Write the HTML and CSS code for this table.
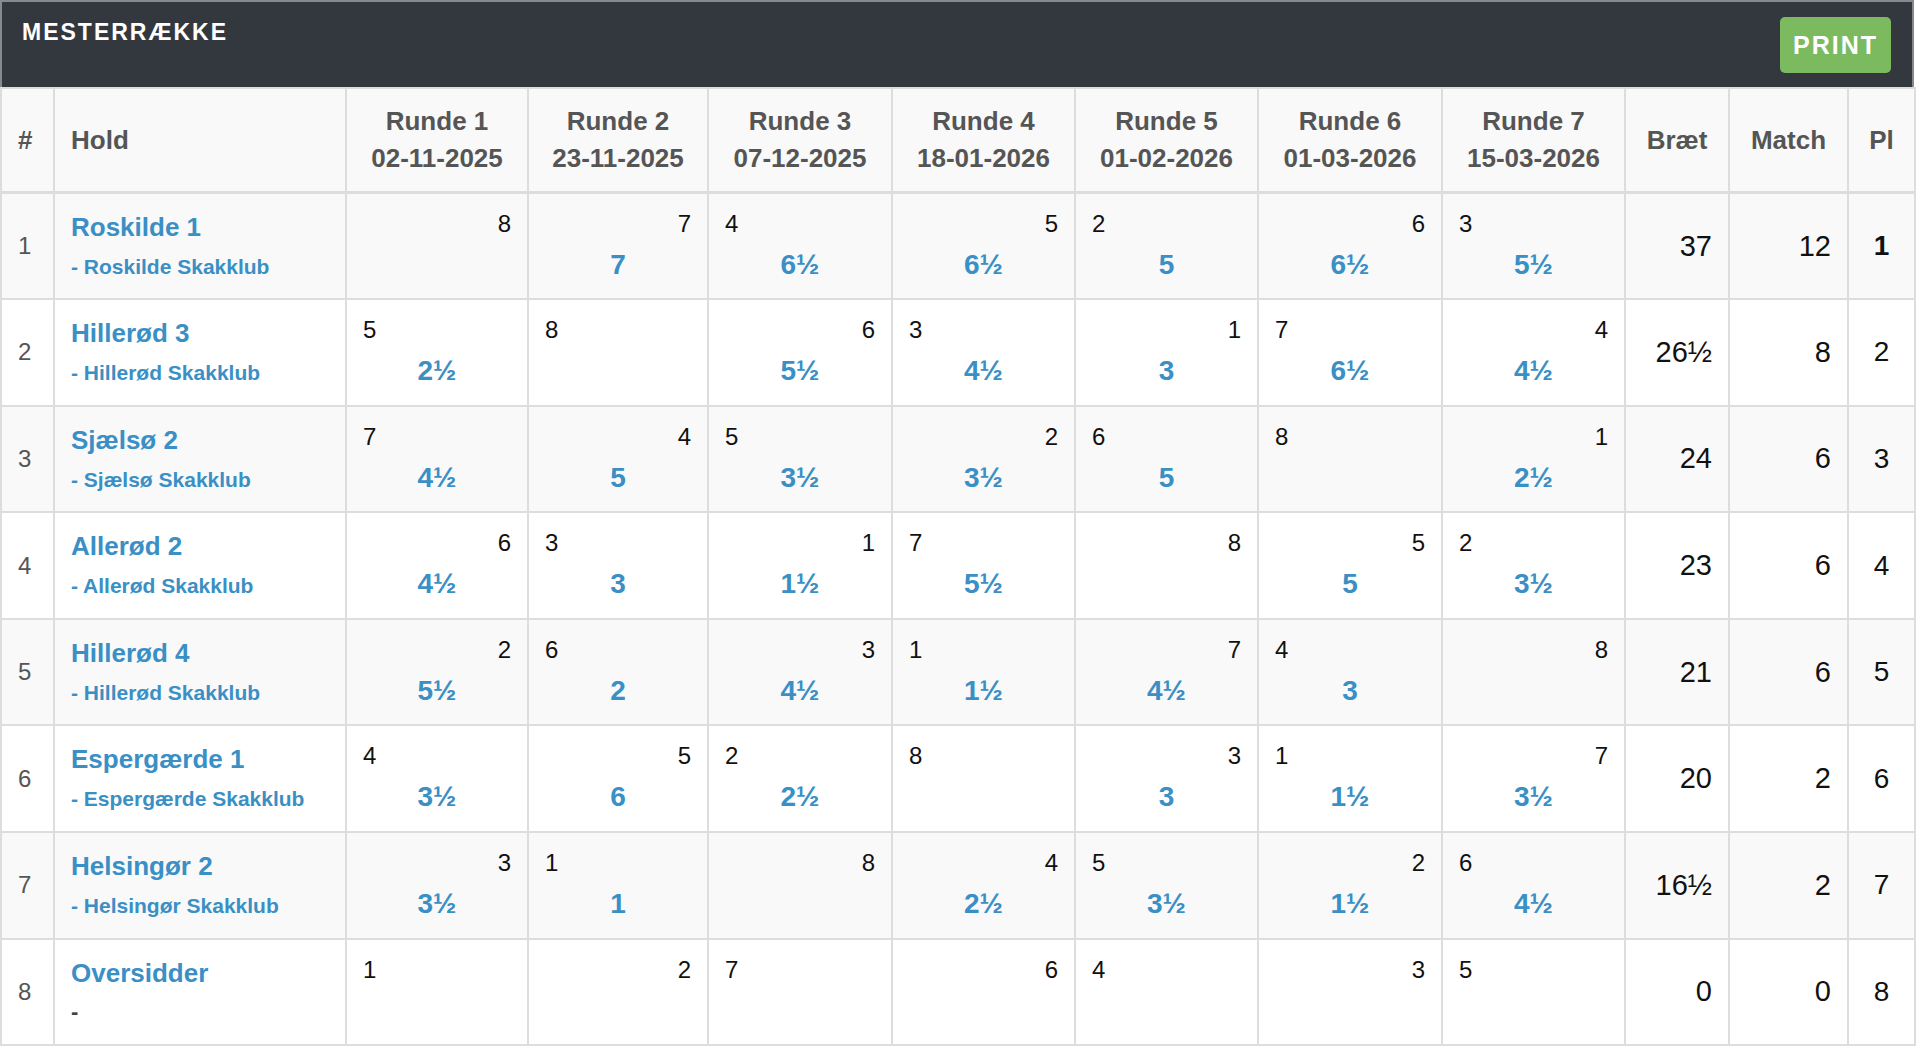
FILE: index.html
```html
<!DOCTYPE html>
<html lang="da">
<head>
<meta charset="utf-8">
<title>Mesterrække</title>
<link rel="stylesheet" href="styles.css">
</head>
<body>
<div class="panel">
  <div class="panel-heading">
    <h1 class="title">MESTERRÆKKE</h1>
    <button class="print" type="button">PRINT</button>
  </div>
  <table class="standings">
    <colgroup>
      <col class="c-no"><col class="c-team">
      <col class="c-r1"><col class="c-r2"><col class="c-r3"><col class="c-r4"><col class="c-r5"><col class="c-r6"><col class="c-r7">
      <col class="c-brat"><col class="c-match"><col class="c-pl">
    </colgroup>
    <thead>
      <tr>
        <th class="left">#</th>
        <th class="left">Hold</th>
        <th>Runde 1<br>02-11-2025</th>
        <th>Runde 2<br>23-11-2025</th>
        <th>Runde 3<br>07-12-2025</th>
        <th>Runde 4<br>18-01-2026</th>
        <th>Runde 5<br>01-02-2026</th>
        <th>Runde 6<br>01-03-2026</th>
        <th>Runde 7<br>15-03-2026</th>
        <th>Bræt</th>
        <th>Match</th>
        <th>Pl</th>
      </tr>
    </thead>
    <tbody>
      <tr>
        <td class="no">1</td>
        <td class="team"><a class="team-name" href="#">Roskilde 1</a><a class="club" href="#">- Roskilde Skakklub</a></td>
        <td class="rd"><div class="opp r">8</div><div class="score"></div></td>
        <td class="rd"><div class="opp r">7</div><div class="score">7</div></td>
        <td class="rd"><div class="opp">4</div><div class="score">6½</div></td>
        <td class="rd"><div class="opp r">5</div><div class="score">6½</div></td>
        <td class="rd"><div class="opp">2</div><div class="score">5</div></td>
        <td class="rd"><div class="opp r">6</div><div class="score">6½</div></td>
        <td class="rd"><div class="opp">3</div><div class="score">5½</div></td>
        <td class="tot">37</td><td class="tot">12</td><td class="pl first">1</td>
      </tr>
      <tr>
        <td class="no">2</td>
        <td class="team"><a class="team-name" href="#">Hillerød 3</a><a class="club" href="#">- Hillerød Skakklub</a></td>
        <td class="rd"><div class="opp">5</div><div class="score">2½</div></td>
        <td class="rd"><div class="opp">8</div><div class="score"></div></td>
        <td class="rd"><div class="opp r">6</div><div class="score">5½</div></td>
        <td class="rd"><div class="opp">3</div><div class="score">4½</div></td>
        <td class="rd"><div class="opp r">1</div><div class="score">3</div></td>
        <td class="rd"><div class="opp">7</div><div class="score">6½</div></td>
        <td class="rd"><div class="opp r">4</div><div class="score">4½</div></td>
        <td class="tot">26½</td><td class="tot">8</td><td class="pl">2</td>
      </tr>
      <tr>
        <td class="no">3</td>
        <td class="team"><a class="team-name" href="#">Sjælsø 2</a><a class="club" href="#">- Sjælsø Skakklub</a></td>
        <td class="rd"><div class="opp">7</div><div class="score">4½</div></td>
        <td class="rd"><div class="opp r">4</div><div class="score">5</div></td>
        <td class="rd"><div class="opp">5</div><div class="score">3½</div></td>
        <td class="rd"><div class="opp r">2</div><div class="score">3½</div></td>
        <td class="rd"><div class="opp">6</div><div class="score">5</div></td>
        <td class="rd"><div class="opp">8</div><div class="score"></div></td>
        <td class="rd"><div class="opp r">1</div><div class="score">2½</div></td>
        <td class="tot">24</td><td class="tot">6</td><td class="pl">3</td>
      </tr>
      <tr>
        <td class="no">4</td>
        <td class="team"><a class="team-name" href="#">Allerød 2</a><a class="club" href="#">- Allerød Skakklub</a></td>
        <td class="rd"><div class="opp r">6</div><div class="score">4½</div></td>
        <td class="rd"><div class="opp">3</div><div class="score">3</div></td>
        <td class="rd"><div class="opp r">1</div><div class="score">1½</div></td>
        <td class="rd"><div class="opp">7</div><div class="score">5½</div></td>
        <td class="rd"><div class="opp r">8</div><div class="score"></div></td>
        <td class="rd"><div class="opp r">5</div><div class="score">5</div></td>
        <td class="rd"><div class="opp">2</div><div class="score">3½</div></td>
        <td class="tot">23</td><td class="tot">6</td><td class="pl">4</td>
      </tr>
      <tr>
        <td class="no">5</td>
        <td class="team"><a class="team-name" href="#">Hillerød 4</a><a class="club" href="#">- Hillerød Skakklub</a></td>
        <td class="rd"><div class="opp r">2</div><div class="score">5½</div></td>
        <td class="rd"><div class="opp">6</div><div class="score">2</div></td>
        <td class="rd"><div class="opp r">3</div><div class="score">4½</div></td>
        <td class="rd"><div class="opp">1</div><div class="score">1½</div></td>
        <td class="rd"><div class="opp r">7</div><div class="score">4½</div></td>
        <td class="rd"><div class="opp">4</div><div class="score">3</div></td>
        <td class="rd"><div class="opp r">8</div><div class="score"></div></td>
        <td class="tot">21</td><td class="tot">6</td><td class="pl">5</td>
      </tr>
      <tr>
        <td class="no">6</td>
        <td class="team"><a class="team-name" href="#">Espergærde 1</a><a class="club" href="#">- Espergærde Skakklub</a></td>
        <td class="rd"><div class="opp">4</div><div class="score">3½</div></td>
        <td class="rd"><div class="opp r">5</div><div class="score">6</div></td>
        <td class="rd"><div class="opp">2</div><div class="score">2½</div></td>
        <td class="rd"><div class="opp">8</div><div class="score"></div></td>
        <td class="rd"><div class="opp r">3</div><div class="score">3</div></td>
        <td class="rd"><div class="opp">1</div><div class="score">1½</div></td>
        <td class="rd"><div class="opp r">7</div><div class="score">3½</div></td>
        <td class="tot">20</td><td class="tot">2</td><td class="pl">6</td>
      </tr>
      <tr>
        <td class="no">7</td>
        <td class="team"><a class="team-name" href="#">Helsingør 2</a><a class="club" href="#">- Helsingør Skakklub</a></td>
        <td class="rd"><div class="opp r">3</div><div class="score">3½</div></td>
        <td class="rd"><div class="opp">1</div><div class="score">1</div></td>
        <td class="rd"><div class="opp r">8</div><div class="score"></div></td>
        <td class="rd"><div class="opp r">4</div><div class="score">2½</div></td>
        <td class="rd"><div class="opp">5</div><div class="score">3½</div></td>
        <td class="rd"><div class="opp r">2</div><div class="score">1½</div></td>
        <td class="rd"><div class="opp">6</div><div class="score">4½</div></td>
        <td class="tot">16½</td><td class="tot">2</td><td class="pl">7</td>
      </tr>
      <tr>
        <td class="no">8</td>
        <td class="team"><a class="team-name" href="#">Oversidder</a><span class="club none">-</span></td>
        <td class="rd"><div class="opp">1</div><div class="score"></div></td>
        <td class="rd"><div class="opp r">2</div><div class="score"></div></td>
        <td class="rd"><div class="opp">7</div><div class="score"></div></td>
        <td class="rd"><div class="opp r">6</div><div class="score"></div></td>
        <td class="rd"><div class="opp">4</div><div class="score"></div></td>
        <td class="rd"><div class="opp r">3</div><div class="score"></div></td>
        <td class="rd"><div class="opp">5</div><div class="score"></div></td>
        <td class="tot">0</td><td class="tot">0</td><td class="pl">8</td>
      </tr>
    </tbody>
  </table>
</div>
</body>
</html>
```

FILE: styles.css
```css
html, body {
  margin: 0;
  padding: 0;
  background: #ffffff;
}

body {
  font-family: "Liberation Sans", Arial, Helvetica, sans-serif;
  color: #111;
}

.panel {
  width: 1914px;
}

.panel-heading {
  display: flex;
  justify-content: space-between;
  align-items: flex-start;
  height: 85px;
  background: #33383e;
  border: 2px solid #868a8e;
  border-bottom: none;
}

.title {
  margin: 0;
  padding: 17px 0 0 20px;
  font-size: 23px;
  line-height: 26px;
  font-weight: bold;
  letter-spacing: 2px;
  color: #ffffff;
}

.print {
  margin: 15px 21px 0 0;
  width: 111px;
  height: 56px;
  padding: 0;
  border: none;
  border-radius: 5px;
  background: #7cba5f;
  color: #ffffff;
  font-family: inherit;
  font-size: 25px;
  font-weight: bold;
  letter-spacing: 2px;
  text-align: center;
}

.standings {
  width: 1914px;
  table-layout: fixed;
  border-collapse: collapse;
  border: 2px solid #dddddd;
}

.c-no { width: 53px; }
.c-team { width: 292px; }
.c-r1 { width: 182px; }
.c-r2 { width: 180px; }
.c-r3 { width: 184px; }
.c-r4 { width: 183px; }
.c-r5 { width: 183px; }
.c-r6 { width: 184px; }
.c-r7 { width: 183px; }
.c-brat { width: 104px; }
.c-match { width: 119px; }
.c-pl { width: 67px; }

.standings th,
.standings td {
  border: 2px solid #dddddd;
  padding: 0 16px;
}

.standings thead tr {
  background: #f9f9f9;
}

.standings th {
  height: 102px;
  padding: 0 8px;
  font-size: 26px;
  line-height: 37px;
  font-weight: bold;
  color: #555555;
  text-align: center;
  vertical-align: middle;
  border-bottom-width: 3px;
}

.standings th.left {
  text-align: left;
  padding-left: 16px;
}

.standings tbody tr:nth-child(odd) {
  background: #f9f9f9;
}

.standings tbody tr:nth-child(even) {
  background: #ffffff;
}

.standings td {
  height: 106.6px;
  vertical-align: top;
  padding-top: 15px;
  box-sizing: border-box;
}

.standings td.no {
  vertical-align: middle;
  padding-top: 0;
  font-size: 24px;
  color: #555555;
}

.team-name,
.club {
  display: block;
  font-weight: bold;
  color: #3a8fc5;
  text-decoration: none;
  white-space: nowrap;
}

.team-name {
  font-size: 26px;
  line-height: 36px;
}

.club {
  margin-top: 7px;
  font-size: 21px;
  line-height: 30px;
}

.club.none {
  color: #444444;
  font-size: 22px;
  margin-top: 6px;
}

.opp {
  font-size: 24px;
  line-height: 30px;
  color: #111111;
  text-align: left;
}

.opp.r {
  text-align: right;
}

.score {
  margin-top: 11px;
  height: 30px;
  font-size: 28px;
  line-height: 30px;
  font-weight: bold;
  color: #3a8fc5;
  text-align: center;
}

.standings td.tot {
  vertical-align: middle;
  padding-top: 0;
  text-align: right;
  font-size: 29px;
  color: #111111;
}

.standings td.pl {
  vertical-align: middle;
  padding: 0;
  text-align: center;
  font-size: 28px;
  color: #111111;
}

.standings td.pl.first {
  font-weight: bold;
}
```
